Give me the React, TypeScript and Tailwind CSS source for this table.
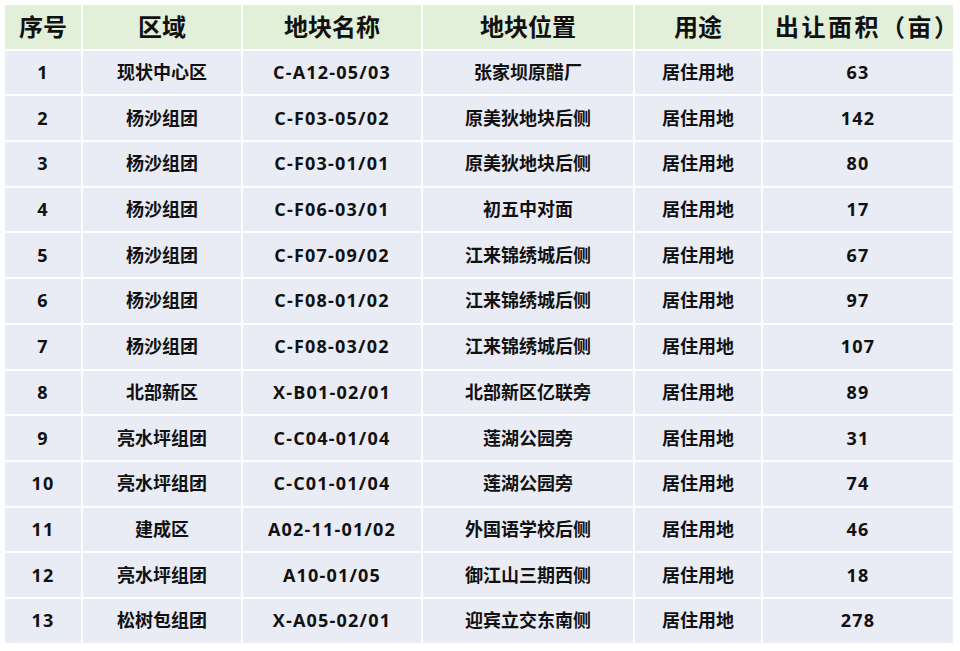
import React from 'react';

const HEADERS = ['序号', '区域', '地块名称', '地块位置', '用途', '出让面积（亩）'];

const ROWS: string[][] = [
  ['1', '现状中心区', 'C-A12-05/03', '张家坝原醋厂', '居住用地', '63'],
  ['2', '杨沙组团', 'C-F03-05/02', '原美狄地块后侧', '居住用地', '142'],
  ['3', '杨沙组团', 'C-F03-01/01', '原美狄地块后侧', '居住用地', '80'],
  ['4', '杨沙组团', 'C-F06-03/01', '初五中对面', '居住用地', '17'],
  ['5', '杨沙组团', 'C-F07-09/02', '江来锦绣城后侧', '居住用地', '67'],
  ['6', '杨沙组团', 'C-F08-01/02', '江来锦绣城后侧', '居住用地', '97'],
  ['7', '杨沙组团', 'C-F08-03/02', '江来锦绣城后侧', '居住用地', '107'],
  ['8', '北部新区', 'X-B01-02/01', '北部新区亿联旁', '居住用地', '89'],
  ['9', '亮水坪组团', 'C-C04-01/04', '莲湖公园旁', '居住用地', '31'],
  ['10', '亮水坪组团', 'C-C01-01/04', '莲湖公园旁', '居住用地', '74'],
  ['11', '建成区', 'A02-11-01/02', '外国语学校后侧', '居住用地', '46'],
  ['12', '亮水坪组团', 'A10-01/05', '御江山三期西侧', '居住用地', '18'],
  ['13', '松树包组团', 'X-A05-02/01', '迎宾立交东南侧', '居住用地', '278'],
];

// columns holding latin text/numbers get extra letter spacing
const LATIN_COLS = [0, 2, 5];

export default function App() {
  return (
    <div
      className="w-[960px] h-[651px] bg-white p-[5px] text-[#111]"
      style={{ fontFamily: '"Open Sans", "Noto Sans CJK SC", sans-serif' }}
    >
      <div className="grid grid-cols-[76px_158px_178px_210px_126px_190px] auto-rows-[43.7px] gap-[2px]">
        {HEADERS.map((h, j) => (
          <div
            key={h}
            className={
              j === 5
                ? 'flex items-center justify-center bg-[#e2efd9] text-[24px] font-bold tracking-[2.5px] pl-[12px]'
                : 'flex items-center justify-center bg-[#e2efd9] text-[24px] font-bold'
            }
          >
            {h}
          </div>
        ))}
        {ROWS.map((row, i) =>
          row.map((cell, j) => (
            <div
              key={`${i}-${j}`}
              className={
                LATIN_COLS.includes(j)
                  ? 'flex items-center justify-center bg-[#e9ebf5] text-[18px] font-bold tracking-[1.2px]'
                  : 'flex items-center justify-center bg-[#e9ebf5] text-[18px] font-bold'
              }
            >
              {cell}
            </div>
          ))
        )}
      </div>
    </div>
  );
}
